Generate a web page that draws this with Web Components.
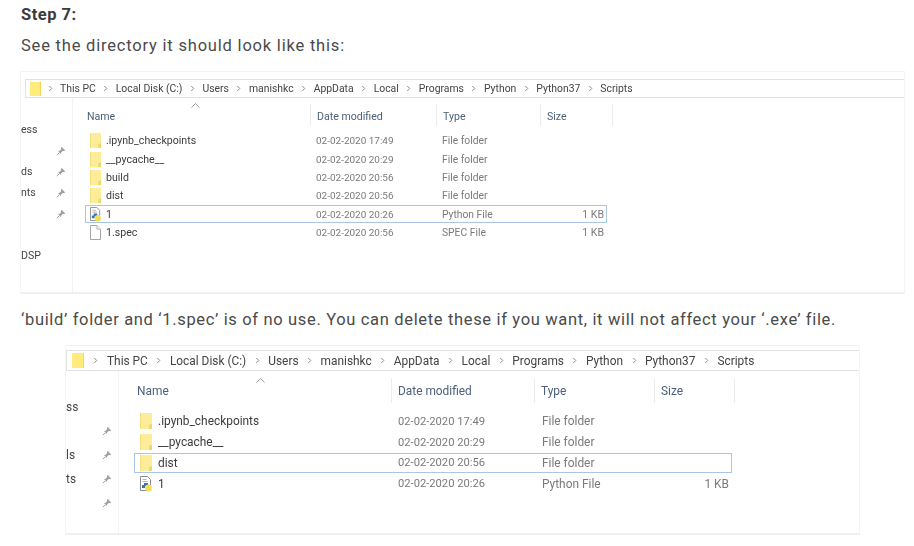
<!DOCTYPE html>
<html lang="en">
<head>
<meta charset="utf-8">
<title>Step 7</title>
<style>
  html, body { margin: 0; background: #fff; }
  body { font-family: "Roboto", "Liberation Sans", sans-serif; color: #444; overflow: hidden; height: 546px; }
</style>
</head>
<body>
<tutorial-step heading="Step 7:">
  <p slot="intro" style="letter-spacing:.8px">See the directory it should look like this:</p>
  <file-explorer slot="before"
    style="--left:20px;--width:885px;--height:223px;--top-gap:7px;
           --addr-h:19px;--addr-left:4px;--addr-pad:4px;--crumb-fs:10.4px;--crumb-gap:20px;--folder-w:11px;--folder-h:14px;--folder-after:5px;
           --side-w:52px;--side-row:21px;--side-top:21px;
           --head-h:28px;--sep-top:6px;--name-pad:14px;--caret-left:118px;--caret-top:5px;
           --c1:238px;--c2:126px;--c3:104px;--c4:72px;
           --fs:10.6px;--type-fs:10.3px;--row:18.4px;--list-top:5.500px;--list-left:12px;--row-pad:4px;--icon-w:11px;--icon-h:15px;--name-gap:5px;
           --r1:230px;--r2:126px;--r3:104px;--r4:60px;"
    labels="ess,,ds,nts,,,DSP" pins="2,3,4,5">
    <file-row name=".ipynb_checkpoints" date="02-02-2020 17:49" type="File folder"></file-row>
    <file-row name="__pycache__" date="02-02-2020 20:29" type="File folder"></file-row>
    <file-row name="build" date="02-02-2020 20:56" type="File folder"></file-row>
    <file-row name="dist" date="02-02-2020 20:56" type="File folder"></file-row>
    <file-row name="1" date="02-02-2020 20:26" type="Python File" size="1 KB" icon="python" selected></file-row>
    <file-row name="1.spec" date="02-02-2020 20:56" type="SPEC File" size="1 KB" icon="file"></file-row>
  </file-explorer>
  <p slot="outro" style="letter-spacing:.66px">‘build’ folder and ‘1.spec’ is of no use. You can delete these if you want, it will not affect your ‘.exe’ file.</p>
  <file-explorer slot="after"
    style="--left:65px;--width:795px;--height:190px;--top-gap:4px;
           --addr-h:21px;--addr-left:0px;--addr-pad:5px;--crumb-fs:11.9px;--crumb-gap:22px;--folder-w:12px;--folder-h:15px;--folder-after:7px;
           --side-w:53px;--side-row:24px;--side-top:24px;
           --head-h:32px;--sep-top:7px;--name-pad:18px;--caret-left:137px;--caret-top:7px;
           --c1:273px;--c2:143px;--c3:120px;--c4:80px;
           --fs:11.9px;--type-fs:11.9px;--row:20.8px;--list-top:8px;--list-left:15px;--row-pad:5px;--icon-w:12px;--icon-h:16px;--name-gap:6px;
           --r1:263px;--r2:144px;--r3:120px;--r4:69px;"
    labels="ss,,ls,ts,," pins="2,3,4,5" trailing-chevron>
    <file-row name=".ipynb_checkpoints" date="02-02-2020 17:49" type="File folder"></file-row>
    <file-row name="__pycache__" date="02-02-2020 20:29" type="File folder"></file-row>
    <file-row name="dist" date="02-02-2020 20:56" type="File folder" selected></file-row>
    <file-row name="1" date="02-02-2020 20:26" type="Python File" size="1 KB" icon="python"></file-row>
  </file-explorer>
</tutorial-step>

<script>
(function() {
    const icons = {
        folder: `<svg viewBox="0 0 12 16" width="100%" height="100%" preserveAspectRatio="none"><path d="M0 0h12v16H0z" fill="#fdec9a"/><path d="M0 0h1v16H0z" fill="#f5df78"/><path d="M9 12l3-1v5H9z" fill="#efd76c"/></svg>`,
        file: `<svg viewBox="0 0 12 16" width="100%" height="100%" preserveAspectRatio="none"><path d="M.5.5h7l4 4v11H.5z" fill="#fff" stroke="#9a9a9a"/><path d="M7.500.5v4h4" fill="#f2f2f2" stroke="#b5b5b5"/></svg>`,
        python: `<svg viewBox="0 0 12 16" width="100%" height="100%" preserveAspectRatio="none"><path d="M.5.5h7l3 3v11H.5z" fill="#fff" stroke="#8d8d8d"/><path d="M2.500 3.500h4M2.500 5.500h5" stroke="#b4b4b4"/><path d="M4 7h4v3H5v2H2V9h2z" fill="#3a75b0"/><circle cx="8.500" cy="12" r="3.400" fill="#f3df55"/></svg>`,
        pin: `<svg viewBox="0 0 10 10" width="10" height="10"><path d="M5.600.8l3.600 3.600-1.100.5-1.500.2L5 6.700l-.3 1.200L2.100 5.300l1.200-.3 1.600-1.600.2-1.500z" fill="#a0a0a0"/><path d="M3.200 6.800L.8 9.200" stroke="#a0a0a0"/></svg>`
    };
    const chevron = `<svg viewBox="0 0 6 8" width="5" height="7"><path d="M1.500 1l3 3-3 3" fill="none" stroke="#8a8a8a" stroke-width="1.200"/></svg>`;

    /*
     *     Page text and the two screenshots
     */
    const stepTemplate = document.createElement('template');
    stepTemplate.innerHTML = `
<style>
  :host { display: block; padding-top: 5px; }
  h3 { margin: 0 0 0 21px; font: 700 16.500px/20px "Roboto", "Liberation Sans", sans-serif; letter-spacing: .5px; color: #3b3b3b; }
  ::slotted(p) { margin: 0 0 0 21px; font-size: 16.500px; line-height: 22px; color: #4a4a4a; white-space: nowrap; }
  .intro { display: block; margin-top: 10px; }
  .before { display: block; margin-top: 14px; }
  .outro { display: block; margin-top: 15px; }
  .after { display: block; margin-top: 14px; }
</style>
<h3></h3>
<slot class="intro" name="intro"></slot>
<slot class="before" name="before"></slot>
<slot class="outro" name="outro"></slot>
<slot class="after" name="after"></slot>`;

    class TutorialStep extends HTMLElement {
        constructor() {
            super();
            this.attachShadow({mode: 'open'});
            this.shadowRoot.appendChild(stepTemplate.content.cloneNode(true));
            this.shadowRoot.querySelector('h3').textContent = this.getAttribute('heading');
        }
    }

    /*
     *     Breadcrumb bar
     */
    class AddressBar extends HTMLElement {
        constructor() {
            super();
            this.attachShadow({mode: 'open'});
            const parts = ['This PC', 'Local Disk (C:)', 'Users', 'manishkc', 'AppData', 'Local', 'Programs', 'Python', 'Python37', 'Scripts'];
            const crumbs = parts.map((p, i) => (i ? `<i>${chevron}</i>` : '') + `<span>${p}</span>`).join('');
            this.shadowRoot.innerHTML = `
<style>
  :host { display: flex; align-items: center; flex: none; box-sizing: border-box; height: var(--addr-h); padding-left: var(--addr-pad);
          margin-left: var(--addr-left); background: #fff; border: 1px solid #e2e2e2; border-right: 0; }
  .folder { box-sizing: border-box; width: var(--folder-w); height: var(--folder-h); background: #ffec7c; border-right: 1px solid #f2d55c; }
  .first { display: flex; justify-content: center; width: 9px; margin: 0 var(--folder-after); }
  .crumbs { display: flex; align-items: center; font-size: var(--crumb-fs); color: #444; white-space: nowrap; }
  .crumbs i { display: flex; justify-content: center; width: var(--crumb-gap); }
</style>
<div class="folder"></div>
<div class="first">${chevron}</div>
<div class="crumbs">${crumbs}${this.hasAttribute('trailing') ? `<i>${chevron}</i>` : ''}</div>`;
        }
    }

    /*
     *     One file in the details list
     */
    class FileRow extends HTMLElement {
        constructor() {
            super();
            this.attachShadow({mode: 'open'});
            const icon = icons[this.getAttribute('icon') || 'folder'];
            const sel = this.hasAttribute('selected');
            this.shadowRoot.innerHTML = `
<style>
  :host { display: grid; grid-template-columns: var(--r1) var(--r2) var(--r3) var(--r4); width: max-content; align-items: center; box-sizing: border-box;
          height: var(--row); margin-left: var(--list-left); border: 1px solid ${sel ? '#a9c6e6' : 'transparent'}; font-size: var(--fs); color: #7a7a7a; white-space: nowrap; }
  .name { display: flex; align-items: center; gap: var(--name-gap); padding-left: var(--row-pad); color: #3c3c3c; }
  .icon { flex: none; width: var(--icon-w); height: var(--icon-h); }
  .date { font-size: .94em; }
  .type { font-size: var(--type-fs); }
  .size { text-align: right; padding-right: 2px; }
</style>
<div class="name"><span class="icon">${icon}</span><span>${this.getAttribute('name')}</span></div>
<div class="date">${this.getAttribute('date')}</div>
<div class="type">${this.getAttribute('type')}</div>
<div class="size">${this.getAttribute('size') || ''}</div>`;
        }
    }

    /*
     *     The explorer window crop
     */
    const explorerTemplate = document.createElement('template');
    explorerTemplate.innerHTML = `
<style>
  :host { display: flex; flex-direction: column; box-sizing: border-box; width: var(--width); height: var(--height); margin-left: var(--left);
          padding-top: var(--top-gap); background: #fff; overflow: hidden; filter: blur(.25px);
          border-top: 1px solid #f3f3f3; border-left: 1px solid #f5f5f5; border-right: 1px solid #f5f5f5; border-bottom: 2px solid #f0f0f0; }
  .body { flex: 1; display: flex; min-height: 0; }
  .side { flex: none; box-sizing: border-box; width: var(--side-w); padding-top: var(--side-top); border-right: 1px solid #f3f3f3; font-size: var(--fs); color: #444; }
  .side div { display: flex; justify-content: space-between; align-items: center; height: var(--side-row); padding-right: 6px; }
  .main { flex: 1; min-width: 0; }
  .head { position: relative; display: grid; grid-template-columns: var(--c1) var(--c2) var(--c3) var(--c4); height: var(--head-h); font-size: var(--fs); color: #4c607a; }
  .head span { box-sizing: border-box; margin-top: var(--sep-top); padding: 6px 0 0 6px; border-right: 1px solid #ececec; }
  .head span:first-child { padding-left: var(--name-pad); }
  .caret { position: absolute; left: var(--caret-left); top: var(--caret-top); }
  .list { padding-top: var(--list-top); }
</style>
<address-bar></address-bar>
<div class="body">
  <div class="side"></div>
  <div class="main">
    <div class="head">
      <span>Name</span><span>Date modified</span><span>Type</span><span>Size</span>
      <svg class="caret" viewBox="0 0 9 5" width="9" height="5"><path d="M.5 4.500l4-4 4 4" fill="none" stroke="#9a9a9a"/></svg>
    </div>
    <div class="list"><slot></slot></div>
  </div>
</div>`;

    class FileExplorer extends HTMLElement {
        constructor() {
            super();
            this.attachShadow({mode: 'open'});
            this.shadowRoot.appendChild(explorerTemplate.content.cloneNode(true));

            if (this.hasAttribute('trailing-chevron')) {
                const bar = document.createElement('address-bar');
                bar.setAttribute('trailing', '');
                this.shadowRoot.querySelector('address-bar').replaceWith(bar);
            }

            // sidebar is just clipped labels on the left and pins on the right
            const labels = this.getAttribute('labels').split(',');
            const pins = this.getAttribute('pins').split(',').map(Number);
            this.shadowRoot.querySelector('.side').innerHTML = labels.map((label, i) =>
                `<div><span>${label}</span>${pins.includes(i + 1) ? icons.pin : ''}</div>`).join('');
        }
    }

    customElements.define('address-bar', AddressBar);
    customElements.define('file-row', FileRow);
    customElements.define('file-explorer', FileExplorer);
    customElements.define('tutorial-step', TutorialStep);
})();
</script>
</body>
</html>
